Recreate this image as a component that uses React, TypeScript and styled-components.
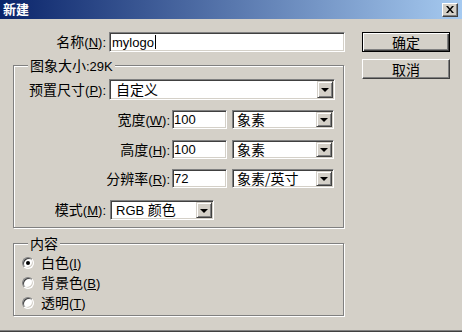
import styled, { createGlobalStyle } from 'styled-components';

const GlobalStyle = createGlobalStyle`
  html, body {
    margin: 0;
    padding: 0;
    background: #d4d0c8;
  }
  body {
    font-family: 'Liberation Sans', 'Noto Sans CJK SC', sans-serif;
    font-size: 13px;
    color: #000;
  }
`;

// CJK glyphs in the original run a little wider than the latin text
const Zh = styled.span`
  font-family: 'Noto Sans CJK SC', sans-serif;
  font-size: 14px;
`;

const Window = styled.div`
  width: 462px;
  height: 332px;
  box-sizing: border-box;
  background: #d4d0c8;
  border-bottom: 1px solid #404040;
  box-shadow: inset 0 -1px 0 #808080;
  display: flex;
  flex-direction: column;
`;

const TitleBar = styled.div`
  height: 19px;
  flex: 0 0 19px;
  display: flex;
  align-items: center;
  padding: 0 4px 0 3px;
  background: linear-gradient(to right, #0a246a, #a6caf0);
`;

const Title = styled.span`
  flex: 1;
  color: #fff;
  font-weight: bold;
  font-size: 13px;
  line-height: 15px;
`;

const CloseButton = styled.div`
  width: 16px;
  height: 14px;
  box-sizing: border-box;
  background: #d4d0c8;
  border: 1px solid;
  border-color: #fff #404040 #404040 #fff;
  box-shadow: inset -1px -1px 0 #808080;
  display: flex;
  align-items: center;
  justify-content: center;
`;

const Body = styled.div`
  flex: 1;
  display: flex;
  padding: 13px 0 0 13px;
`;

const LeftCol = styled.div`
  width: 332px;
  display: flex;
  flex-direction: column;
`;

const RightCol = styled.div`
  margin-left: 17px;
  display: flex;
  flex-direction: column;
  gap: 7px;
`;

const Row = styled.div<{ $mt?: number; $h?: number }>`
  display: flex;
  align-items: center;
  margin-top: ${(p) => p.$mt ?? 0}px;
  height: ${(p) => p.$h ?? 20}px;
`;

const Label = styled.span<{ $w: number; $gap?: number }>`
  width: ${(p) => p.$w}px;
  margin-right: ${(p) => p.$gap ?? 3}px;
  flex-shrink: 0;
  text-align: right;
  white-space: nowrap;
  line-height: 15px;
`;

const Field = styled.div<{ $w: number; $h: number; $pad?: number }>`
  width: ${(p) => p.$w}px;
  height: ${(p) => p.$h}px;
  flex-shrink: 0;
  box-sizing: border-box;
  background: #fff;
  border: 1px solid;
  border-color: #808080 #fff #fff #808080;
  box-shadow: inset 1px 1px 0 #404040, inset -1px -1px 0 #d4d0c8;
  display: flex;
  align-items: center;
  padding: 1px 1px 1px ${(p) => p.$pad ?? 2}px;
  white-space: nowrap;
  line-height: 15px;
`;

const FieldText = styled.span`
  flex: 1;
`;

const Caret = styled.span`
  width: 1px;
  height: 14px;
  background: #000;
  margin-left: 1px;
`;

const DropButton = styled.div`
  width: 16px;
  align-self: stretch;
  box-sizing: border-box;
  background: #d4d0c8;
  border: 1px solid;
  border-color: #d4d0c8 #404040 #404040 #d4d0c8;
  box-shadow: inset 1px 1px 0 #fff, inset -1px -1px 0 #808080;
  display: flex;
  align-items: center;
  justify-content: center;
`;

const Arrow = styled.span`
  width: 0;
  height: 0;
  border-left: 4px solid transparent;
  border-right: 4px solid transparent;
  border-top: 4px solid #000;
  margin-top: 1px;
`;

const Spacer = styled.span<{ $w: number }>`
  width: ${(p) => p.$w}px;
  flex-shrink: 0;
`;

const Group = styled.div<{ $h: number; $mt: number }>`
  width: 331px;
  height: ${(p) => p.$h}px;
  margin-top: ${(p) => p.$mt}px;
  box-sizing: border-box;
  border: 1px solid #808080;
  box-shadow: inset 1px 1px 0 #fff, 1px 1px 0 #fff;
  display: flex;
  flex-direction: column;
`;

const Legend = styled.span`
  align-self: flex-start;
  margin: -8px 0 0 14px;
  padding: 0 2px;
  background: #d4d0c8;
  line-height: 15px;
`;

const Button = styled.div<{ $default?: boolean }>`
  width: 88px;
  height: 20px;
  box-sizing: border-box;
  display: flex;
  align-items: center;
  justify-content: center;
  background: #d4d0c8;
  line-height: 15px;
  border: 1px solid;
  border-color: ${(p) => (p.$default ? '#000' : '#fff #404040 #404040 #fff')};
  box-shadow: ${(p) =>
    p.$default
      ? 'inset 1px 1px 0 #fff, inset -1px -1px 0 #404040, inset -2px -2px 0 #808080'
      : 'inset -1px -1px 0 #808080'};
`;

const RadioRow = styled.div`
  display: flex;
  align-items: center;
  height: 20px;
  padding-left: 8px;
`;

const RadioCircle = styled.span`
  width: 12px;
  height: 12px;
  box-sizing: border-box;
  border-radius: 50%;
  background: #fff;
  border: 1px solid;
  border-color: #808080 #fff #fff #808080;
  box-shadow: inset 1px 1px 0 #404040, inset -1px -1px 0 #d4d0c8;
  display: flex;
  align-items: center;
  justify-content: center;
  margin-right: 7px;
  flex-shrink: 0;
`;

const Dot = styled.span`
  width: 4px;
  height: 4px;
  border-radius: 50%;
  background: #000;
`;

const RadioLabel = styled.span`
  line-height: 15px;
`;

const Key = ({ k }: { k: string }) => <u>{k}</u>;

const Select = ({ w, h, pad, children }: { w: number; h: number; pad?: number; children: React.ReactNode }) => (
  <Field $w={w} $h={h} $pad={pad}>
    <FieldText>{children}</FieldText>
    <DropButton>
      <Arrow />
    </DropButton>
  </Field>
);

const Radio = ({ checked, text, k }: { checked?: boolean; text: string; k: string }) => (
  <RadioRow>
    <RadioCircle>{checked && <Dot />}</RadioCircle>
    <RadioLabel>
      <Zh>{text}</Zh>(<Key k={k} />)
    </RadioLabel>
  </RadioRow>
);

const sizeRows = [
  { label: '宽度', k: 'W', value: '100', unit: '象素', mt: 10 },
  { label: '高度', k: 'H', value: '100', unit: '象素', mt: 11 },
  { label: '分辨率', k: 'R', value: '72', unit: '象素/英寸', mt: 10 },
];

export default function App() {
  return (
    <>
      <GlobalStyle />
      <Window>
        <TitleBar>
          <Title>新建</Title>
          <CloseButton>
            <svg width="8" height="7" viewBox="0 0 8 7">
              <path d="M0 0h2l2 2.5L6 0h2L5 3.5 8 7H6L4 4.5 2 7H0l3-3.5z" fill="#000" />
            </svg>
          </CloseButton>
        </TitleBar>
        <Body>
          <LeftCol>
            <Row>
              <Label $w={93}>
                <Zh>名称</Zh>(<Key k="N" />):
              </Label>
              <Field $w={236} $h={20} $pad={2}>
                mylogo
                <Caret />
              </Field>
            </Row>

            <Group $h={163} $mt={13}>
              <Legend>
                <Zh>图象大小</Zh>:29K
              </Legend>
              <Row $mt={5} $h={21}>
                <Label $w={92}>
                  <Zh>预置尺寸</Zh>(<Key k="P" />):
                </Label>
                <Select w={226} h={21} pad={6}>
                  <Zh>自定义</Zh>
                </Select>
              </Row>
              {sizeRows.map((r) => (
                <Row key={r.k} $mt={r.mt} $h={19}>
                  <Label $w={156} $gap={2}>
                    <Zh>{r.label}</Zh>(<Key k={r.k} />):
                  </Label>
                  <Field $w={55} $h={19} $pad={1}>
                    {r.value}
                  </Field>
                  <Spacer $w={5} />
                  <Select w={102} h={19} pad={4}>
                    <Zh>{r.unit}</Zh>
                  </Select>
                </Row>
              ))}
              <Row $mt={12} $h={20}>
                <Label $w={92} $gap={4}>
                  <Zh>模式</Zh>(<Key k="M" />):
                </Label>
                <Select w={104} h={20} pad={5}>
                  RGB <Zh>颜色</Zh>
                </Select>
              </Row>
            </Group>

            <Group $h={73} $mt={15}>
              <Legend>
                <Zh>内容</Zh>
              </Legend>
              <Row $mt={1} $h={0} />
              <Radio checked text="白色" k="I" />
              <Radio text="背景色" k="B" />
              <Radio text="透明" k="T" />
            </Group>
          </LeftCol>

          <RightCol>
            <Button $default>
              <Zh>确定</Zh>
            </Button>
            <Button>
              <Zh>取消</Zh>
            </Button>
          </RightCol>
        </Body>
      </Window>
    </>
  );
}
